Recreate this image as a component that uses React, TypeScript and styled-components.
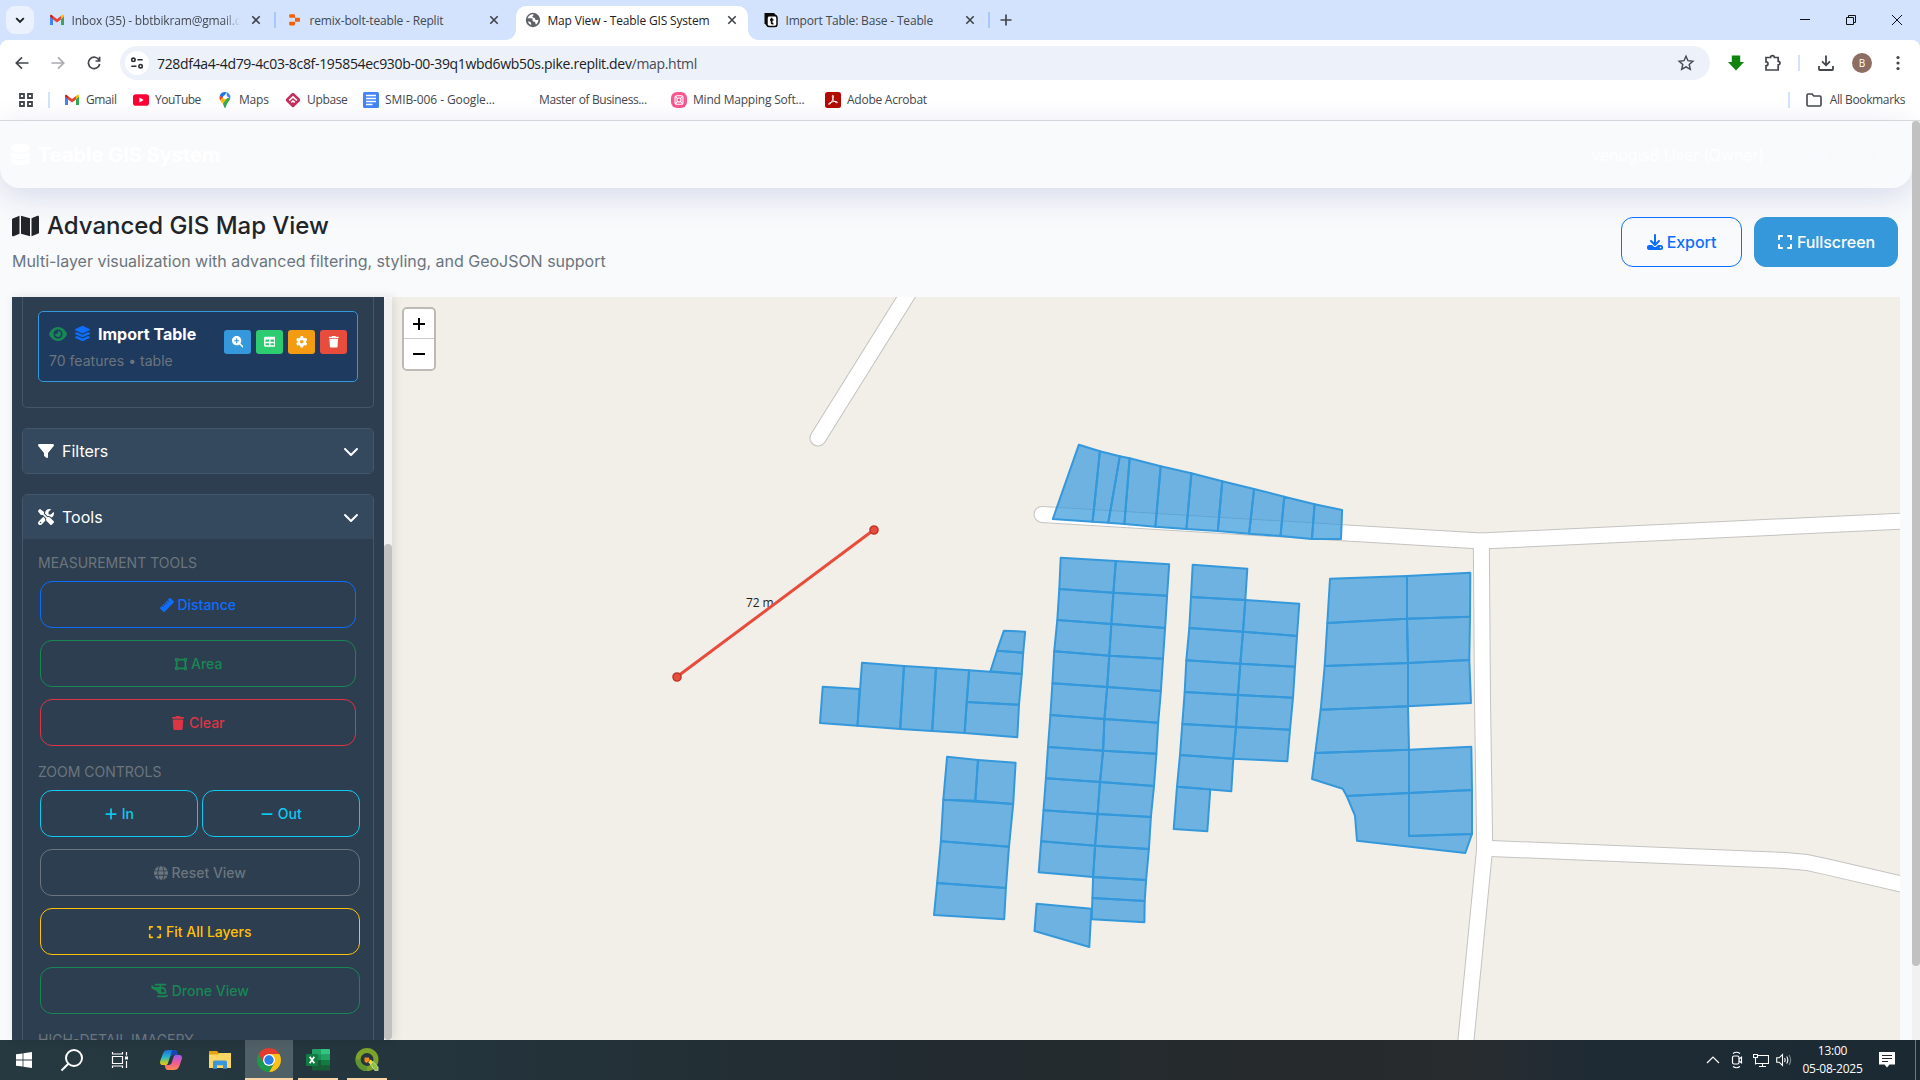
import React from "react";
import styled, { createGlobalStyle, css } from "styled-components";
import {
  FaDatabase,
  FaMap,
  FaDownload,
  FaExpand,
  FaEye,
  FaLayerGroup,
  FaMagnifyingGlassPlus,
  FaTable,
  FaGear,
  FaTrash,
  FaFilter,
  FaScrewdriverWrench,
  FaChevronDown,
  FaRuler,
  FaVectorSquare,
  FaGlobe,
  FaHelicopter,
  FaPlus,
  FaMinus,
  FaRightFromBracket,
} from "react-icons/fa6";

const UI_FONT = `"Open Sans", "Noto Sans", sans-serif`;
const PAGE_FONT = `Inter, "Open Sans", sans-serif`;

const GlobalStyle = createGlobalStyle`
  *, *::before, *::after { box-sizing: border-box; }
  body { margin: 0; overflow: hidden; }
`;

const Screen = styled.div`
  width: 1920px;
  height: 1080px;
  display: flex;
  flex-direction: column;
  overflow: hidden;
  background: #f8fafc;
  font-family: ${UI_FONT};
`;

/* ---------- browser chrome ---------- */

const TabStrip = styled.div`
  flex: none;
  height: 40px;
  display: flex;
  padding: 6px 0 0 6px;
  background: #d3e3fd;
`;

const TabSearch = styled.div`
  width: 28px;
  height: 28px;
  margin-right: 4px;
  display: grid;
  place-items: center;
  border-radius: 9px;
  background: #ebf2fe;
`;

const Tab = styled.div<{ $active?: boolean }>`
  position: relative;
  width: 238px;
  height: 28px;
  padding: 0 12px 0 10.5px;
  display: flex;
  align-items: center;
  color: #44494f;
  ${(p) =>
    p.$active &&
    css`
      color: #1f2023;
      &::before {
        content: "";
        position: absolute;
        z-index: 0;
        left: 2px;
        right: 4px;
        top: 0;
        height: 34px;
        border-radius: 10px 10px 0 0;
        background: #fff;
      }
      &::after {
        content: "";
        position: absolute;
        z-index: 0;
        left: -8px;
        right: -6px;
        top: 24px;
        height: 10px;
        background: radial-gradient(circle at 0 0, transparent 9.5px, #fff 10px) left / 10px 10px no-repeat,
          radial-gradient(circle at 100% 0, transparent 9.5px, #fff 10px) right / 10px 10px no-repeat;
      }
    `}
  & > * {
    position: relative;
    z-index: 1;
  }
`;

const TabTitle = styled.span<{ $fade?: boolean }>`
  width: 168px;
  margin-left: 7px;
  padding-top: 2px;
  overflow: hidden;
  white-space: nowrap;
  font-size: 12px;
  line-height: 18px;
  letter-spacing: -0.17px;
  ${(p) => p.$fade && css`mask-image: linear-gradient(90deg, #000 152px, transparent 168px);`}
`;

const TabClose = styled.span`
  margin-left: auto;
  display: grid;
  place-items: center;
  width: 16px;
  height: 16px;
`;

const TabRule = styled.i`
  width: 2px;
  height: 16px;
  margin: 6px 0 0 -2px;
  background: #a8c7fa;
`;

const NewTab = styled.div`
  width: 28px;
  height: 28px;
  margin-left: 2px;
  display: grid;
  place-items: center;
`;

const WindowControls = styled.div`
  margin: -6px 0 0 auto;
  display: flex;

  svg {
    width: 46px;
    height: 40px;
  }
`;

const Toolbar = styled.div`
  flex: none;
  height: 46px;
  display: flex;
  align-items: center;
  background: #fff;
  border-radius: 8px 8px 0 0;
`;

const ToolbarBack = styled.div`
  flex: none;
  background: #d3e3fd;
`;

const ToolIcon = styled.span<{ $w: number }>`
  flex: none;
  width: ${(p) => p.$w}px;
  height: 34px;
  display: grid;
  place-items: center;
`;

const Omnibox = styled.div`
  width: 1590px;
  height: 34px;
  margin-left: 4px;
  padding: 0 14px 0 5px;
  display: flex;
  align-items: center;
  border-radius: 17px;
  background: #ecf1fa;
`;

const SiteInfo = styled.span`
  width: 24px;
  height: 24px;
  display: grid;
  place-items: center;
  border-radius: 50%;
  background: #fff;
`;

const Url = styled.span`
  flex: 1;
  margin-left: 8px;
  font-size: 14px;
  letter-spacing: -0.32px;
  color: #202124;
  white-space: nowrap;

  em {
    font-style: normal;
    color: #474b50;
  }
`;

const VRule = styled.i`
  flex: none;
  width: 2px;
  height: 16px;
  background: #d3e3fd;
`;

const Avatar = styled.span`
  width: 20px;
  height: 20px;
  display: grid;
  place-items: center;
  border-radius: 50%;
  background: #8d6e63;
  color: #fff;
  font-size: 10px;
`;

const BookmarksBar = styled.div`
  flex: none;
  height: 35px;
  padding: 0 15px 7px 18px;
  display: flex;
  align-items: center;
  background: #fff;
  border-bottom: 1px solid #dcdee0;
`;

const Bookmark = styled.div<{ $w?: number; $spacing?: number }>`
  flex: none;
  width: ${(p) => (p.$w ? `${p.$w}px` : "auto")};
  display: flex;
  align-items: center;
  gap: 6px;
  font-size: 12px;
  line-height: 16px;
  letter-spacing: ${(p) => p.$spacing ?? -0.2}px;
  color: #44484d;
  white-space: nowrap;
`;

const AllBookmarks = styled.div`
  margin-left: auto;
  display: flex;
  align-items: center;

  svg {
    margin: 0 8px 0 16px;
  }
`;

/* ---------- page ---------- */

const PageRow = styled.div`
  flex: 1;
  min-height: 0;
  display: flex;
`;

const Page = styled.div`
  width: 1912px;
  display: flex;
  flex-direction: column;
  font-family: ${PAGE_FONT};
  color: #212529;
`;

const ScrollTrack = styled.div`
  width: 8px;
  background: #f1f1f1;
`;

const ScrollThumb = styled.div<{ $h: number }>`
  height: ${(p) => p.$h}px;
  border-radius: 4px;
  background: #c1c1c1;
`;

const Navbar = styled.header`
  flex: none;
  height: 67px;
  padding: 0 12px 0 11px;
  display: flex;
  align-items: center;
  border-radius: 0 0 20px 20px;
  background: #f9fafc;
  box-shadow: 0 8px 32px rgba(31, 38, 135, 0.15);
  color: #fff;
`;

const Brand = styled.div`
  display: flex;
  align-items: center;
  gap: 8px;
  font-size: 20px;
  font-weight: 700;

  svg {
    width: 19px;
    height: 21px;
  }
`;

const UserName = styled.span`
  margin-left: auto;
  font-size: 16px;
  letter-spacing: -0.14px;
`;

const Logout = styled.span`
  margin: 0 0 0 20px;
  width: 116px;
  height: 38px;
  display: flex;
  align-items: center;
  justify-content: center;
  gap: 5px;
  border: 1px solid #fafbfd;
  border-radius: 10px;
  font-size: 14px;
  color: #f7f9fb;
`;

const Heading = styled.section`
  flex: none;
  height: 109px;
  padding: 24px 14px 0 12px;
  display: flex;
  align-items: flex-start;
`;

const Title = styled.h1`
  margin: 0;
  display: flex;
  align-items: center;
  gap: 8px;
  font-size: 24px;
  line-height: 28px;
  font-weight: 450;
  letter-spacing: -0.03px;

  svg {
    width: 27px;
    height: 24px;
  }
`;

const Subtitle = styled.p`
  margin: 9px 0 0;
  font-size: 16px;
  line-height: 24px;
  letter-spacing: -0.02px;
  color: #6c757d;
`;

const HeadActions = styled.div`
  margin: 5px 0 0 auto;
  display: flex;
  gap: 12px;
`;

const HeadButton = styled.button<{ $solid?: boolean; $w: number }>`
  width: ${(p) => p.$w}px;
  height: 50px;
  padding: 0;
  display: flex;
  align-items: center;
  justify-content: center;
  gap: 4px;
  border: 1px solid ${(p) => (p.$solid ? "#3498db" : "#0d6efd")};
  border-radius: 12px;
  background: ${(p) => (p.$solid ? "#3498db" : "transparent")};
  color: ${(p) => (p.$solid ? "#fff" : "#0d6efd")};
  font: 500 16px ${PAGE_FONT};
  letter-spacing: -0.05px;
`;

const Workspace = styled.main`
  flex: 1;
  min-height: 0;
  margin: 0 12px;
  display: flex;
`;

const Sidebar = styled.aside`
  position: relative;
  z-index: 1;
  width: 380px;
  display: flex;
  box-shadow: 2px 0 10px rgba(0, 0, 0, 0.1);
`;

const SidebarBody = styled.div`
  width: 372px;
  padding: 0 10px;
  overflow: hidden;
  background: #2c3e50;
`;

const SidebarScroll = styled.div`
  width: 8px;
  padding-top: 247px;
  background: #f1f1f1;
  border-radius: 4px 4px 0 0;
`;

const Panel = styled.div<{ $tail?: boolean }>`
  border: 1px solid #44566a;
  border-radius: 5px;
  overflow: hidden;
  margin-bottom: 20px;
  ${(p) =>
    p.$tail &&
    css`
      height: 111px;
      border-top: 0;
      border-radius: 0 0 5px 5px;
      padding: 14px 15px 0;
    `}
`;

const PanelHeader = styled.div`
  height: 44px;
  padding: 0 14px 0 15px;
  display: flex;
  align-items: center;
  gap: 8px;
  background: #34495e;
  color: #fff;
  font-size: 16px;

  svg:last-child {
    margin-left: auto;
  }
`;

const LayerCard = styled.div`
  height: 71px;
  padding: 0 10px;
  display: flex;
  align-items: center;
  border: 1px solid #3498db;
  border-radius: 5px;
  background: #1e3a5f;
`;

const LayerText = styled.div`
  flex: 1;
  margin-top: -1px;
`;

const LayerName = styled.div`
  display: flex;
  align-items: center;
  gap: 7px;
  color: #fff;
  font-size: 16px;
  line-height: 24px;
  font-weight: 700;
`;

const LayerMeta = styled.div`
  margin-top: 5px;
  font-size: 14px;
  line-height: 20px;
  letter-spacing: 0.03px;
  color: #6c757d;
`;

const LayerActions = styled.div`
  display: flex;
  gap: 5px;
  margin-top: -9px;
`;

const MiniButton = styled.span<{ $bg: string }>`
  width: 27px;
  height: 24px;
  display: grid;
  place-items: center;
  border-radius: 3px;
  background: ${(p) => p.$bg};
  color: #fff;
  font-size: 11.5px;
`;

const ToolsBody = styled.div`
  height: 560px;
  padding: 15px 13px 0 17px;
`;

const GroupLabel = styled.h6`
  margin: 0 0 9px -2px;
  font-size: 14px;
  line-height: 18px;
  font-weight: 400;
  color: #6c757d;
  text-transform: uppercase;
`;

const ToolGroup = styled.div<{ $w: number }>`
  width: ${(p) => p.$w}px;
  margin-bottom: 17px;
  display: flex;
  flex-wrap: wrap;
  gap: 12px 4px;
`;

const ToolButton = styled.button<{ $c: string; $half?: boolean }>`
  width: ${(p) => (p.$half ? "158px" : "100%")};
  height: 47px;
  padding: 0;
  display: flex;
  align-items: center;
  justify-content: center;
  gap: 3.5px;
  border: 1px solid ${(p) => p.$c};
  border-radius: 12px;
  background: transparent;
  color: ${(p) => p.$c};
  font: 500 14px ${PAGE_FONT};
`;

/* ---------- map ---------- */

const MapPane = styled.div`
  position: relative;
  width: 1508px;
  overflow: hidden;
  background: #f2efe9;

  & > svg {
    display: block;
  }
`;

const ZoomControl = styled.div`
  position: absolute;
  left: 10px;
  top: 10px;
  width: 34px;
  border: 2px solid rgba(0, 0, 0, 0.22);
  border-radius: 5px;
  background-clip: padding-box;
`;

const ZoomButton = styled.div<{ $last?: boolean }>`
  height: 30px;
  display: grid;
  place-items: center;
  background: #fff;
  border-bottom: ${(p) => (p.$last ? "0" : "1px solid #ccc")};
  border-radius: ${(p) => (p.$last ? "0 0 3px 3px" : "3px 3px 0 0")};
`;

type Pt = [number, number];
type Sheet = { x: number; y: number; sx: number; sy: number };

const WEST: Sheet = { x: 800, y: 540, sx: 540 / 1568, sy: 1 / 3 };
const EAST: Sheet = { x: 1160, y: 480, sx: 1 / 3, sy: 1 / 3 };
const NORTH: Sheet = { x: 780, y: 280, sx: 600 / 1568, sy: 1 / 3 };

const place = (s: Sheet, cells: Pt[][]) =>
  cells.map((cell) => cell.map(([x, y]) => `${(s.x + x * s.sx).toFixed(1)},${(s.y + y * s.sy).toFixed(1)}`).join(" "));

/* Turns two boundary lines into the quadrilaterals between them. */
const between = (a: Pt[], b: Pt[]): Pt[][] =>
  a.slice(1).map((_, i) => [a[i], b[i], b[i + 1], a[i + 1]]);

const stripTop: Pt[] = [[781, 494], [836, 514], [888, 529], [914, 535], [995, 559], [1075, 580], [1156, 604], [1239, 627], [1318, 650], [1397, 673], [1469, 690]];
const stripBottom: Pt[] = [[713, 717], [817, 725], [858, 728], [900, 732], [981, 740], [1062, 747], [1144, 753], [1226, 761], [1308, 768], [1390, 777], [1466, 777]];

const midL: Pt[] = [[757, 53], [753, 147], [747, 240], [738, 334], [733, 430], [727, 525], [720, 621], [714, 715], [707, 811], [700, 904], [693, 997]];
const midC: Pt[] = [[917, 63], [910, 158], [904, 252], [898, 347], [892, 441], [884, 537], [880, 632], [871, 726], [864, 822], [857, 917], [851, 1011], [849, 1074], [847, 1138]];
const midR: Pt[] = [[1072, 73], [1066, 167], [1060, 264], [1054, 356], [1048, 453], [1040, 548], [1035, 641], [1028, 738], [1019, 831], [1013, 927], [1005, 1020], [1001, 1083], [1000, 1147]];

const colL: Pt[] = [[98, 254], [93, 351], [88, 444], [79, 541], [74, 636], [67, 732], [60, 825], [51, 920]];
const colC: Pt[] = [[262, 266], [256, 360], [249, 455], [241, 551], [234, 645], [228, 741], [220, 836], [214, 934]];
const colR: Pt[] = [[418, 371], [411, 468], [405, 560], [399, 653], [390, 749], [382, 844]];

const endL: Pt[] = [[510, 296], [502, 429], [494, 558], [482, 689], [466, 819]];
const endC: Pt[] = [[741, 288], [741, 416], [744, 549], [744, 679], [747, 809], [747, 939], [747, 1068]];
const endR: Pt[] = [[931, 278], [930, 410], [928, 540], [933, 669]];

const PARCELS: string[] = [
  ...place(NORTH, between(stripTop, stripBottom)),
  ...place(WEST, [
    [[66, 440], [173, 447], [167, 557], [58, 549]],
    [[180, 368], [302, 378], [291, 567], [167, 557]],
    [[302, 378], [395, 384], [384, 573], [291, 567]],
    [[395, 384], [491, 391], [478, 579], [384, 573]],
    [[491, 391], [644, 402], [636, 494], [484, 486]],
    [[484, 486], [636, 494], [631, 592], [478, 579]],
    [[572, 332], [648, 338], [644, 402], [553, 394]],
    [[592, 272], [654, 275], [648, 338], [572, 332]],
    [[427, 650], [517, 660], [509, 782], [416, 779]],
    [[517, 660], [626, 668], [619, 792], [509, 782]],
    [[416, 779], [619, 792], [607, 920], [409, 904]],
    [[409, 904], [607, 920], [598, 1044], [398, 1029]],
    [[398, 1029], [598, 1044], [593, 1138], [389, 1125]],
    ...between(midL, midC),
    ...between(midC, midR),
    [[687, 1091], [846, 1106], [840, 1221], [681, 1173]],
  ]),
  ...place(EAST, [
    ...between(colL, colC),
    ...between(colC.slice(1, 7), colR),
    [[51, 920], [151, 928], [142, 1054], [41, 1047]],
    ...between(endL, endC),
    ...between(endC.slice(0, 4), endR),
    [[466, 819], [747, 809], [747, 939], [560, 948], [548, 926], [456, 897]],
    [[747, 809], [934, 800], [936, 930], [747, 939]],
    [[747, 939], [936, 930], [936, 1062], [747, 1068]],
    [[560, 948], [747, 939], [747, 1068], [936, 1062], [916, 1119], [591, 1082], [585, 1007]],
  ]),
];

const ROADS = [
  "M911 289 L818 438",
  "M1042 514.4 L1342.7 532.8 L1481 541 L1900 521.2 L1910 520.7",
  "M1481.3 541 L1482.5 700 L1484.7 848 L1465 1050",
  "M1484.7 848.2 L1785 860.5 L1807 862.5 L1827 866.8 L1910 886",
];

const MapCanvas = () => (
  <svg width="1508" height="743" viewBox="392 297 1508 743">
    <g fill="none" strokeLinecap="round" strokeLinejoin="round">
      {ROADS.map((d) => (
        <path key={d} d={d} stroke="#c4c3c0" strokeWidth="17" />
      ))}
      {ROADS.map((d) => (
        <path key={d} d={d} stroke="#fff" strokeWidth="15" />
      ))}
    </g>
    <g fill="#3498db" fillOpacity="0.7" stroke="#3498db" strokeWidth="2" strokeLinejoin="round">
      {PARCELS.map((p) => (
        <polygon key={p} points={p} />
      ))}
    </g>
    <text x="746" y="607" fontFamily={UI_FONT} fontSize="12" letterSpacing="-0.1" fill="#222">
      72 m
    </text>
    <path d="M677 676.7 L874 529.7" stroke="#e74c3c" strokeWidth="3" />
    <circle cx="677" cy="677" r="4" fill="#e74c3c" stroke="#c0392b" strokeWidth="1.6" />
    <circle cx="874" cy="530" r="4" fill="#e74c3c" stroke="#c0392b" strokeWidth="1.6" />
  </svg>
);

/* ---------- taskbar ---------- */

const Taskbar = styled.footer`
  flex: none;
  height: 40px;
  display: flex;
  background: linear-gradient(90deg, #263840 0, #24353d 420px, #222b30 900px, #272a2c 1360px, #272c30 1490px, #1e2b35 1600px, #1b2a32 1920px);
  color: #fff;
`;

const TaskItem = styled.div<{ $w: number; $open?: boolean; $active?: boolean }>`
  width: ${(p) => p.$w}px;
  height: 40px;
  display: grid;
  place-items: center;
  background: ${(p) => (p.$active ? "#506067" : "transparent")};
  ${(p) =>
    p.$open &&
    css`
      background-image: linear-gradient(#fbd5a8, #fbd5a8);
      background-repeat: no-repeat;
      background-position: center bottom;
      background-size: ${p.$active ? "100%" : "40px"} 2px;
    `}
`;

const Tray = styled.div`
  margin-left: auto;
  display: flex;
  align-items: center;
`;

const Clock = styled.div`
  width: 75px;
  text-align: center;
  font-size: 12px;
  line-height: 18px;
  letter-spacing: -0.25px;
`;

const ShowDesktop = styled.i`
  width: 1px;
  height: 40px;
  margin: 0 4px 0 11px;
  background: #6e7a80;
`;

/* ---------- drawings ---------- */

const CloseX = () => (
  <svg width="10" height="10" viewBox="0 0 10 10" stroke="#3f4247" strokeWidth="1.6">
    <path d="M1.3 1.3 8.7 8.7M8.7 1.3 1.3 8.7" />
  </svg>
);

const GmailIcon = () => (
  <svg width="16" height="16" viewBox="0 0 16 16">
    <path d="M1 3.6V13h3V7.2z" fill="#4285f4" />
    <path d="M15 3.6V13h-3V7.2z" fill="#34a853" />
    <path d="M1 4.5 4 7.3V4L2.8 3C1.9 2.4 1 3 1 4z" fill="#c5221f" />
    <path d="M4 4v3.6l4 3 4-3V4L8 7z" fill="#ea4335" />
    <path d="M15 4.5 12 7.3V4l1.2-1c.9-.6 1.8 0 1.8 1z" fill="#fbbc04" />
  </svg>
);

const ReplitIcon = () => (
  <svg width="16" height="16" viewBox="0 0 16 16" fill="#f26207">
    <path d="M3 2.2h4.2q.8 0 .8.8v2.7H3q-.8 0-.8-.8V3q0-.8.8-.8zM8 5.700h4.200q.8 0 .8.8v2.400q0 .8-.8.8H8zM3 9.700h5v2.900q0 .8-.8.8H3q-.8 0-.8-.8v-2.100q0-.8.8-.8z" />
  </svg>
);

const GlobeIcon = () => (
  <svg width="16" height="16" viewBox="0 0 16 16">
    <circle cx="8" cy="8" r="7.2" fill="#5f6368" />
    <path d="M8.3 2.3c1 .7-.6 1.7-.9 2.5-.4.9 1.6.7 2.4 1.5.8.8.2 1.7 1.3 1.8.9.1 1.8-.7 2.3-.4.2 1.7-.9 3.8-2.3 4.7-1.2-.3-.2-1.7-1.1-2.5-.8-.7-2.4-.3-2.5-1.5-.1-.9.6-1.5-.4-1.8-1.5-.5-3.3-.3-4.4-.1C3.2 4 5.6 2 8.3 2.3zM3 9.500c1.300.1 2.500.3 3 1.300.4.8-.2 1.500.5 2.300C4.600 12.600 3.400 11.200 3 9.500z" fill="#fff" />
  </svg>
);

const TeableIcon = () => (
  <svg width="16" height="16" viewBox="0 0 16 16">
    <path d="M2 1h9l3 3v11H5L1.500 11.500V1.500z" fill="#0b0b0b" />
    <rect x="4" y="3.8" width="10" height="10.700" rx="2.200" fill="#fff" stroke="#0b0b0b" strokeWidth="1.500" />
    <path d="M8.600 5.800v5q0 1.100 1.800.8M7 7.800h3.400" fill="none" stroke="#0b0b0b" strokeWidth="1.700" />
  </svg>
);

const YouTubeIcon = () => (
  <svg width="16" height="16" viewBox="0 0 16 16">
    <rect y="2.3" width="16" height="11.4" rx="2.8" fill="#f03" />
    <path d="M6.400 5.500v5L10.700 8z" fill="#fff" />
  </svg>
);

const MapsIcon = () => (
  <svg width="16" height="16" viewBox="0 0 16 16">
    <path d="M8 0C5.500 0 3.300 1.400 2.700 3.900L6 6.300 9.600 .3Q8.800 0 8 0z" fill="#1a73e8" />
    <path d="M9.600.3C12 1 13.400 3 13.400 5.300q0 .8-.2 1.500L9.800 4z" fill="#4285f4" />
    <path d="M2.700 3.900c-.5 1.700-.1 3.200.6 4.500L6.200 5z" fill="#ea4335" />
    <path d="M3.300 8.400c.6 1.200 1.600 2.200 2.500 3.400L10 6.500 6.200 5z" fill="#fbbc04" />
    <path d="M13.200 6.200C12.600 9.500 9.800 10.500 8.800 15.300q-.8 1.300-1.600 0C7 14 6.500 13 5.800 11.800L10.300 6z" fill="#34a853" />
    <circle cx="8" cy="5.200" r="2" fill="#fff" />
  </svg>
);

const UpbaseIcon = () => (
  <svg width="16" height="16" viewBox="0 0 16 16">
    <rect x="2.400" y="2.400" width="11.200" height="11.200" rx="1.600" transform="rotate(45 8 8)" fill="#c4305d" />
    <path d="M4.200 8.400 8 4.800l3.800 3.600M6.200 10.400 8 9l1.800 1.400" fill="none" stroke="#fff" strokeWidth="1.600" />
  </svg>
);

const DocsIcon = () => (
  <svg width="16" height="16" viewBox="0 0 16 16">
    <rect width="16" height="16" rx="1.500" fill="#4285f4" />
    <path d="M3 3.500h10M3 6.500h10M3 9.500h10M3 12.500h6.500" stroke="#fff" strokeWidth="1.300" />
  </svg>
);

const MindIcon = () => (
  <svg width="16" height="16" viewBox="0 0 16 16">
    <rect width="16" height="16" rx="6" fill="#f9558f" />
    <g fill="none" stroke="#fff" strokeWidth="1.100">
      <rect x="4" y="3.700" width="8" height="8.600" rx="2" />
      <circle cx="8" cy="8" r="2" />
      <path d="M4 4l2.400 2.400M12 4 9.600 6.400M4 12l2.400-2.400M12 12 9.600 9.600" />
    </g>
  </svg>
);

const AcrobatIcon = () => (
  <svg width="16" height="16" viewBox="0 0 16 16">
    <rect width="16" height="16" rx="2.500" fill="#b30b00" />
    <path d="M7.800 3.200c1 0 .7 2.400-.2 4.600C6.600 10.100 4.900 12.600 3.900 12.400c-1.200-.3 1.200-2.300 4.300-2.800 2.700-.4 4.600.1 4.300.9-.4 1-3-.5-4.200-2.600C7.300 6.200 7 3.200 7.800 3.200z" fill="none" stroke="#fff" strokeWidth="1" />
  </svg>
);

const AppsIcon = () => (
  <svg width="16" height="16" viewBox="0 0 16 16" fill="none" stroke="#43474c" strokeWidth="1.800">
    <path d="M2 2h4v4H2zM10 2h4v4h-4zM2 10h4v4H2zM10 10h4v4h-4z" />
  </svg>
);

const WindowsLogo = () => (
  <svg width="16" height="16" viewBox="0 0 16 16" fill="#fff">
    <path d="M0 2.300 6.600 1.400V7.600H0zM7.400 1.300 16 0v7.600H7.400zM0 8.400h6.600v6.200L0 13.700zM7.400 8.400H16V16l-8.600-1.200z" />
  </svg>
);

const CopilotLogo = () => (
  <svg width="24" height="24" viewBox="0 0 24 24">
    <defs>
      <linearGradient id="cpA" x1="0" y1="0" x2="0" y2="1">
        <stop offset="0" stopColor="#1b6fe0" />
        <stop offset=".5" stopColor="#2bb8c4" />
        <stop offset=".8" stopColor="#a8c83a" />
        <stop offset="1" stopColor="#f4c21d" />
      </linearGradient>
      <linearGradient id="cpB" x1="0" y1="0" x2="0" y2="1">
        <stop offset="0" stopColor="#9b5cf0" />
        <stop offset=".5" stopColor="#ee5a9a" />
        <stop offset="1" stopColor="#fb8a4a" />
      </linearGradient>
    </defs>
    <path d="M9 2h6.500c1.500 0 2 .8 2.400 2L18.600 7H14c-2 0-2.700 1-3.200 2.500L9 15c-.5 1.500-1.200 2-2.500 2H3.500C1.300 17 .6 15.200 1.200 13L4 5.500C4.900 3 6.500 2 9 2z" fill="url(#cpA)" />
    <path d="M15 22H9c-1.500 0-2.200-.8-2.600-2L5.600 17H9.500c2 0 2.800-1 3.300-2.500L14.600 9c.5-1.500 1.300-2 2.600-2h3.300c2.200 0 2.900 1.800 2.300 4l-2.600 7.500C19.200 21 17.500 22 15 22z" fill="url(#cpB)" />
    <path d="M13 2h2.500c1.500 0 2 .8 2.400 2l.7 3H14c-1.500 0-2.300.6-2.800 1.600z" fill="#1748b0" />
  </svg>
);

const FolderLogo = () => (
  <svg width="22" height="20" viewBox="0 0 22 20">
    <path d="M0 1.500Q0 1 .6 1H8l2 2.200h11.400q.6 0 .6.600V18H0z" fill="#e5a312" />
    <path d="M0 4.500h9L10.600 3H22v14.300q0 .7-.7.700H.7q-.7 0-.7-.7z" fill="#fdd663" />
    <path d="M4 18.800V12q0-1.500 1.500-1.500h11Q18 10.500 18 12v6.800h-4v-3.500H8v3.500z" fill="#3c96dc" />
  </svg>
);

const ChromeLogo = () => (
  <svg width="24" height="24" viewBox="0 0 24 24">
    <path d="M12 6h10.390A12 12 0 0 1 12 24l5.200-9z" fill="#fbc116" />
    <path d="M1.610 6 6.800 15 12 18l5.200-3L12 24A12 12 0 0 1 1.610 6z" fill="#1e9a4b" />
    <path d="M1.610 6A12 12 0 0 1 22.390 6H12L6.800 15z" fill="#e33b2e" />
    <circle cx="12" cy="12" r="6" fill="#fff" />
    <circle cx="12" cy="12" r="4.700" fill="#2b7de9" />
  </svg>
);

const ExcelLogo = () => (
  <svg width="24" height="22" viewBox="0 0 24 22">
    <path d="M6 1q0-1 1-1h8v11H6z" fill="#21a366" />
    <path d="M15 0h8q1 0 1 1v4.800h-9z" fill="#33c481" />
    <path d="M6 5.800h9v5.200H6z" fill="#1b8f56" />
    <path d="M15 5.800h9v5.200h-9z" fill="#21a366" />
    <path d="M6 11h18v9.500q0 1-1 1H7q-1 0-1-1z" fill="#185c37" />
    <path d="M15 11h9v5.200h-9z" fill="#107c41" />
    <rect y="5" width="12" height="12" rx="1" fill="#107c41" />
    <path d="M3.700 7.800 8.300 14.200M8.300 7.800 3.700 14.200" stroke="#fff" strokeWidth="1.700" />
  </svg>
);

const QgisLogo = () => (
  <svg width="24" height="24" viewBox="0 0 24 24">
    <circle cx="12" cy="11.500" r="9" fill="none" stroke="#7fa32a" strokeWidth="5" />
    <path d="M12 20.500a9 9 0 0 1-9-9" fill="none" stroke="#5f9530" strokeWidth="5" />
    <path d="M9.500 9.500h4.300l1 2.800-3.200 2.700-2.100-1.500z" fill="#f08a22" />
    <path d="M13.200 14.200l2.500-2.700 3 3-2.600 2.700z" fill="#eed92a" />
    <path d="M15.200 16.400l2.900-2.900 5 5.500V22.500h-3.300z" fill="#8fc34a" stroke="#e6efd8" strokeWidth=".6" />
  </svg>
);

/* ---------- data ---------- */

const TABS = [
  { title: "Inbox (35) - bbtbikram@gmail.com", icon: <GmailIcon />, fade: true, rule: true },
  { title: "remix-bolt-teable - Replit", icon: <ReplitIcon /> },
  { title: "Map View - Teable GIS System", icon: <GlobeIcon />, active: true },
  { title: "Import Table: Base - Teable", icon: <TeableIcon />, rule: true },
];

const BOOKMARKS = [
  { label: "Gmail", icon: <GmailIcon />, w: 69, spacing: -0.4 },
  { label: "YouTube", icon: <YouTubeIcon />, w: 84, spacing: -0.5 },
  { label: "Maps", icon: <MapsIcon />, w: 68, spacing: -0.2 },
  { label: "Upbase", icon: <UpbaseIcon />, w: 78, spacing: -0.35 },
  { label: "SMIB-006 - Google...", icon: <DocsIcon />, w: 154, spacing: -0.1 },
  { label: "Master of Business...", icon: <svg width="16" height="16" />, w: 154, spacing: -0.37 },
  { label: "Mind Mapping Soft...", icon: <MindIcon />, w: 154, spacing: -0.2 },
  { label: "Adobe Acrobat", icon: <AcrobatIcon />, w: 120, spacing: -0.25 },
];

const BrowserChrome = () => (
  <>
    <TabStrip>
      <TabSearch>
        <svg width="10" height="7" viewBox="0 0 10 7" fill="none" stroke="#1f2023" strokeWidth="1.900">
          <path d="M1.200 1.200 5 5l3.800-3.800" />
        </svg>
      </TabSearch>
      {TABS.map((t) => (
        <React.Fragment key={t.title}>
          <Tab $active={t.active}>
            {t.icon}
            <TabTitle $fade={t.fade}>{t.title}</TabTitle>
            <TabClose><CloseX /></TabClose>
          </Tab>
          {t.rule && <TabRule />}
        </React.Fragment>
      ))}
      <NewTab>
        <svg width="12" height="12" viewBox="0 0 12 12" stroke="#43474c" strokeWidth="1.700">
          <path d="M6 .5v11M.5 6h11" />
        </svg>
      </NewTab>
      <WindowControls>
        <svg viewBox="0 0 46 40" stroke="#111" fill="none"><path d="M18 19.500h10" /></svg>
        <svg viewBox="0 0 46 40" stroke="#111" fill="none"><path d="M18.500 17.500h7v7h-7zM20.500 17.500v-2h7v7h-2" /></svg>
        <svg viewBox="0 0 46 40" stroke="#111" fill="none"><path d="M18 15l10 10M28 15 18 25" /></svg>
      </WindowControls>
    </TabStrip>
    <ToolbarBack>
      <Toolbar>
        <ToolIcon $w={44}>
          <svg width="14" height="14" viewBox="0 0 14 14" fill="none" stroke="#43474c" strokeWidth="1.700"><path d="M13.500 7H1.500M7 1.300 1.300 7 7 12.700" /></svg>
        </ToolIcon>
        <ToolIcon $w={28}>
          <svg width="14" height="14" viewBox="0 0 14 14" fill="none" stroke="#a9abae" strokeWidth="1.700"><path d="M.5 7h12M7 1.300 12.700 7 7 12.700" /></svg>
        </ToolIcon>
        <ToolIcon $w={44}>
          <svg width="14" height="14" viewBox="0 0 14 14" fill="none" stroke="#43474c" strokeWidth="1.700"><path d="M12.200 4.300A5.700 5.700 0 1 0 12.700 8M12.600.8v4.200H8.500" /></svg>
        </ToolIcon>
        <Omnibox>
          <SiteInfo>
            <svg width="14" height="12" viewBox="0 0 14 12" fill="none" stroke="#2b2e32" strokeWidth="1.600"><circle cx="3.400" cy="2.800" r="1.700" /><path d="M7.500 2.800h5.200M1.300 9.200h5.200" /><circle cx="10.600" cy="9.200" r="1.700" /></svg>
          </SiteInfo>
          <Url>728df4a4-4d79-4c03-8c8f-195854ec930b-00-39q1wbd6wb50s.pike.replit.dev<em>/map.html</em></Url>
          <svg width="20" height="20" viewBox="0 0 20 20" fill="none" stroke="#43474c" strokeWidth="1.400"><path d="M10 3.200l2 4.500 4.900.5-3.700 3.300 1.100 4.800L10 13.800l-4.300 2.500 1.100-4.800L3.100 8.200 8 7.700z" /></svg>
        </Omnibox>
        <ToolIcon $w={52}>
          <svg width="16" height="16" viewBox="0 0 16 16" fill="#0f850f"><path d="M3.800.5h8.400V7H16l-8 8.500L0 7h3.800z" /></svg>
        </ToolIcon>
        <ToolIcon $w={22}>
          <svg width="18" height="18" viewBox="0 0 18 18" fill="none" stroke="#43474c" strokeWidth="1.700"><path d="M2 3.500h4.600a1.900 1.900 0 0 1 3.800 0H14.200V7.300a1.800 1.800 0 0 1 0 3.600V16H2V11.800a2 2 0 0 0 0-4z" /></svg>
        </ToolIcon>
        <ToolIcon $w={30}><VRule /></ToolIcon>
        <ToolIcon $w={24}>
          <svg width="16" height="16" viewBox="0 0 16 16" fill="none" stroke="#43474c" strokeWidth="1.800"><path d="M8 .5V10M4 6.300 8 10.300l4-4M1 11v3.200q0 .8.800.8h12.400q.8 0 .8-.8V11" /></svg>
        </ToolIcon>
        <ToolIcon $w={48}><Avatar>B</Avatar></ToolIcon>
        <ToolIcon $w={24}>
          <svg width="4" height="16" viewBox="0 0 4 16" fill="#43474c"><circle cx="2" cy="2.500" r="1.600" /><circle cx="2" cy="8" r="1.600" /><circle cx="2" cy="13.500" r="1.600" /></svg>
        </ToolIcon>
      </Toolbar>
    </ToolbarBack>
    <BookmarksBar>
      <Bookmark $w={30}><AppsIcon /></Bookmark>
      <Bookmark $w={16}><VRule /></Bookmark>
      {BOOKMARKS.map((b) => (
        <Bookmark key={b.label} $w={b.w} $spacing={b.spacing}>
          {b.icon}
          {b.label}
        </Bookmark>
      ))}
      <AllBookmarks>
        <VRule />
        <svg width="16" height="14" viewBox="0 0 16 14" fill="none" stroke="#43474c" strokeWidth="1.600"><path d="M1 2.300Q1 1 2.200 1H6l1.800 2h6q1.200 0 1.200 1.200v7.600Q15 13 13.800 13H2.200Q1 13 1 11.800z" /></svg>
        <Bookmark $spacing={-0.36}>All Bookmarks</Bookmark>
      </AllBookmarks>
    </BookmarksBar>
  </>
);

const SidePanel = () => (
  <Sidebar>
    <SidebarBody>
      <Panel $tail>
        <LayerCard>
          <LayerText>
            <LayerName>
              <FaEye color="#198754" size={18} />
              <FaLayerGroup color="#0d6efd" size={17} />
              Import Table
            </LayerName>
            <LayerMeta>70 features • table</LayerMeta>
          </LayerText>
          <LayerActions>
            <MiniButton $bg="#3498db"><FaMagnifyingGlassPlus /></MiniButton>
            <MiniButton $bg="#2ecc71"><FaTable /></MiniButton>
            <MiniButton $bg="#f39c12"><FaGear /></MiniButton>
            <MiniButton $bg="#e74c3c"><FaTrash /></MiniButton>
          </LayerActions>
        </LayerCard>
      </Panel>
      <Panel>
        <PanelHeader>
          <FaFilter />
          Filters
          <FaChevronDown />
        </PanelHeader>
      </Panel>
      <Panel>
        <PanelHeader>
          <FaScrewdriverWrench />
          Tools
          <FaChevronDown />
        </PanelHeader>
        <ToolsBody>
          <GroupLabel>Measurement Tools</GroupLabel>
          <ToolGroup $w={316}>
            <ToolButton $c="#0d6efd"><FaRuler />Distance</ToolButton>
            <ToolButton $c="#198754"><FaVectorSquare />Area</ToolButton>
            <ToolButton $c="#dc3545"><FaTrash />Clear</ToolButton>
          </ToolGroup>
          <GroupLabel>Zoom Controls</GroupLabel>
          <ToolGroup $w={320}>
            <ToolButton $c="#0dcaf0" $half><FaPlus />In</ToolButton>
            <ToolButton $c="#0dcaf0" $half><FaMinus />Out</ToolButton>
            <ToolButton $c="#6c757d"><FaGlobe />Reset View</ToolButton>
            <ToolButton $c="#ffc107"><FaExpand />Fit All Layers</ToolButton>
            <ToolButton $c="#198754"><FaHelicopter size={17} />Drone View</ToolButton>
          </ToolGroup>
          <GroupLabel>High-Detail Imagery</GroupLabel>
        </ToolsBody>
      </Panel>
    </SidebarBody>
    <SidebarScroll>
      <ScrollThumb $h={496} />
    </SidebarScroll>
  </Sidebar>
);

const BottomBar = () => (
  <Taskbar>
    <TaskItem $w={48}><WindowsLogo /></TaskItem>
    <TaskItem $w={48}>
      <svg width="24" height="24" viewBox="0 0 24 24" fill="none" stroke="#fff" strokeWidth="2"><circle cx="14" cy="10" r="8" /><path d="M8.300 15.700 1.500 22.500" /></svg>
    </TaskItem>
    <TaskItem $w={48}>
      <svg width="18" height="18" viewBox="0 0 18 18" fill="none" stroke="#fff" strokeWidth="1.200"><path d="M1.500 5.500h10v7h-10zM1.500 1v2h10V1M1.500 17v-2h10v2M15.500 1v3.500M15.500 10v7" /><path d="M14 5.500h3v3h-3z" fill="#fff" stroke="none" /></svg>
    </TaskItem>
    <TaskItem $w={54}><CopilotLogo /></TaskItem>
    <TaskItem $w={44}><FolderLogo /></TaskItem>
    <TaskItem $w={3} />
    <TaskItem $w={48} $open $active><ChromeLogo /></TaskItem>
    <TaskItem $w={50} $open><ExcelLogo /></TaskItem>
    <TaskItem $w={48} $open><QgisLogo /></TaskItem>
    <Tray>
      <ToolIcon $w={24}>
        <svg width="14" height="8" viewBox="0 0 14 8" fill="none" stroke="#fff" strokeWidth="1.200"><path d="M1 7l6-6 6 6" /></svg>
      </ToolIcon>
      <ToolIcon $w={24}>
        <svg width="14" height="18" viewBox="0 0 14 18" fill="none" stroke="#fff" strokeWidth="1.200"><rect x="2.500" y="5" width="6.500" height="8" rx="1.500" /><path d="M9 8l2.500-1.800v5.600L9 10M3 2.500q3.500-2.500 7 0M3 15.500q3.500 2.500 7 0" /></svg>
      </ToolIcon>
      <ToolIcon $w={24}>
        <svg width="16" height="16" viewBox="0 0 16 16" fill="none" stroke="#fff" strokeWidth="1.100"><path d="M5 3.500h10.500v8H3M.5 2.500h4v3h-4zM2.500 5.500v7M9.500 11.500v3M6 14.500h7" /></svg>
      </ToolIcon>
      <ToolIcon $w={22}>
        <svg width="17" height="14" viewBox="0 0 17 14" fill="none" stroke="#fff" strokeWidth="1.100"><path d="M.7 4.800h2.500L6.500 1.500v11L3.200 9.200H.7zM8.500 5q1.300 2 0 4M10.700 3.500q2.300 3.500 0 7" /><path d="M13 2q3.300 5 0 10" stroke="#7b868b" /></svg>
      </ToolIcon>
      <Clock>
        <div>13:00</div>
        <div>05-08-2025</div>
      </Clock>
      <ToolIcon $w={34}>
        <svg width="16" height="16" viewBox="0 0 16 16"><path d="M0 0h16v12.500h-5.500L8 15.500l-2.500-3H0z" fill="#fff" /><path d="M3 3.500h10M3 6.500h10M3 9.500h6" stroke="#1b2a32" strokeWidth="1.100" /></svg>
      </ToolIcon>
      <ShowDesktop />
    </Tray>
  </Taskbar>
);

export default function App() {
  return (
    <Screen>
      <GlobalStyle />
      <BrowserChrome />
      <PageRow>
        <Page>
          <Navbar>
            <Brand>
              <FaDatabase />
              Teable GIS System
            </Brand>
            <UserName>venugis8 User (Owner)</UserName>
            <Logout>
              <FaRightFromBracket />
              Logout
            </Logout>
          </Navbar>
          <Heading>
            <div>
              <Title>
                <FaMap />
                Advanced GIS Map View
              </Title>
              <Subtitle>Multi-layer visualization with advanced filtering, styling, and GeoJSON support</Subtitle>
            </div>
            <HeadActions>
              <HeadButton $w={121}><FaDownload />Export</HeadButton>
              <HeadButton $w={144} $solid><FaExpand />Fullscreen</HeadButton>
            </HeadActions>
          </Heading>
          <Workspace>
            <SidePanel />
            <MapPane>
              <MapCanvas />
              <ZoomControl>
                <ZoomButton>
                  <svg width="14" height="14" viewBox="0 0 14 14" stroke="#000" strokeWidth="2"><path d="M7 1v12M1 7h12" /></svg>
                </ZoomButton>
                <ZoomButton $last>
                  <svg width="14" height="14" viewBox="0 0 14 14" stroke="#000" strokeWidth="2"><path d="M1 7h12" /></svg>
                </ZoomButton>
              </ZoomControl>
            </MapPane>
          </Workspace>
        </Page>
        <ScrollTrack>
          <ScrollThumb $h={845} />
        </ScrollTrack>
      </PageRow>
      <BottomBar />
    </Screen>
  );
}
